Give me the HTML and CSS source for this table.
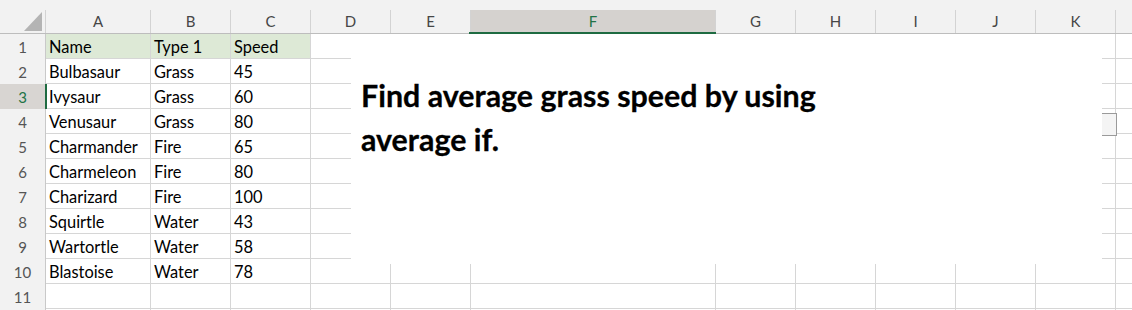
FILE: index.html
```html
<!DOCTYPE html>
<html lang="en">
<head>
<meta charset="utf-8">
<title>Pokémon speeds</title>
<link rel="stylesheet" href="styles.css">
</head>
<body>
<div class="sheet">
  <div class="col-heads">
    <div class="corner"><span class="select-all"></span></div>
    <div class="ch">A</div>
    <div class="ch">B</div>
    <div class="ch">C</div>
    <div class="ch">D</div>
    <div class="ch">E</div>
    <div class="ch sel">F</div>
    <div class="ch">G</div>
    <div class="ch">H</div>
    <div class="ch">I</div>
    <div class="ch">J</div>
    <div class="ch">K</div>
    <div class="ch"></div>
  </div>

  <div class="row">
    <div class="rh">1</div>
    <div class="c head">Name</div><div class="c head">Type 1</div><div class="c head">Speed</div>
    <div class="c"></div><div class="c"></div><div class="c"></div><div class="c"></div><div class="c"></div><div class="c"></div><div class="c"></div><div class="c"></div><div class="c"></div>
  </div>
  <div class="row">
    <div class="rh">2</div>
    <div class="c">Bulbasaur</div><div class="c">Grass</div><div class="c">45</div>
    <div class="c"></div><div class="c"></div><div class="c"></div><div class="c"></div><div class="c"></div><div class="c"></div><div class="c"></div><div class="c"></div><div class="c"></div>
  </div>
  <div class="row">
    <div class="rh sel">3</div>
    <div class="c">Ivysaur</div><div class="c">Grass</div><div class="c">60</div>
    <div class="c"></div><div class="c"></div><div class="c"></div><div class="c"></div><div class="c"></div><div class="c"></div><div class="c"></div><div class="c"></div><div class="c"></div>
  </div>
  <div class="row">
    <div class="rh">4</div>
    <div class="c">Venusaur</div><div class="c">Grass</div><div class="c">80</div>
    <div class="c"></div><div class="c"></div><div class="c"></div><div class="c"></div><div class="c"></div><div class="c"></div><div class="c"></div><div class="c"></div><div class="c"></div>
  </div>
  <div class="row">
    <div class="rh">5</div>
    <div class="c">Charmander</div><div class="c">Fire</div><div class="c">65</div>
    <div class="c"></div><div class="c"></div><div class="c"></div><div class="c"></div><div class="c"></div><div class="c"></div><div class="c"></div><div class="c"></div><div class="c"></div>
  </div>
  <div class="row">
    <div class="rh">6</div>
    <div class="c">Charmeleon</div><div class="c">Fire</div><div class="c">80</div>
    <div class="c"></div><div class="c"></div><div class="c"></div><div class="c"></div><div class="c"></div><div class="c"></div><div class="c"></div><div class="c"></div><div class="c"></div>
  </div>
  <div class="row">
    <div class="rh">7</div>
    <div class="c">Charizard</div><div class="c">Fire</div><div class="c">100</div>
    <div class="c"></div><div class="c"></div><div class="c"></div><div class="c"></div><div class="c"></div><div class="c"></div><div class="c"></div><div class="c"></div><div class="c"></div>
  </div>
  <div class="row">
    <div class="rh">8</div>
    <div class="c">Squirtle</div><div class="c">Water</div><div class="c">43</div>
    <div class="c"></div><div class="c"></div><div class="c"></div><div class="c"></div><div class="c"></div><div class="c"></div><div class="c"></div><div class="c"></div><div class="c"></div>
  </div>
  <div class="row">
    <div class="rh">9</div>
    <div class="c">Wartortle</div><div class="c">Water</div><div class="c">58</div>
    <div class="c"></div><div class="c"></div><div class="c"></div><div class="c"></div><div class="c"></div><div class="c"></div><div class="c"></div><div class="c"></div><div class="c"></div>
  </div>
  <div class="row">
    <div class="rh">10</div>
    <div class="c">Blastoise</div><div class="c">Water</div><div class="c">78</div>
    <div class="c"></div><div class="c"></div><div class="c"></div><div class="c"></div><div class="c"></div><div class="c"></div><div class="c"></div><div class="c"></div><div class="c"></div>
  </div>
  <div class="row">
    <div class="rh">11</div>
    <div class="c"></div><div class="c"></div><div class="c"></div>
    <div class="c"></div><div class="c"></div><div class="c"></div><div class="c"></div><div class="c"></div><div class="c"></div><div class="c"></div><div class="c"></div><div class="c"></div>
  </div>
  <div class="row">
    <div class="rh"></div>
    <div class="c"></div><div class="c"></div><div class="c"></div>
    <div class="c"></div><div class="c"></div><div class="c"></div><div class="c"></div><div class="c"></div><div class="c"></div><div class="c"></div><div class="c"></div><div class="c"></div>
  </div>

  <div class="textbox">
    <p class="task">Find average grass speed by using average if.</p>
    <span class="handle"></span>
  </div>
</div>
</body>
</html>
```

FILE: styles.css
```css
html, body {
  margin: 0;
  padding: 0;
  background: #ffffff;
  overflow: hidden;
}

.sheet {
  position: relative;
  width: 1132px;
  height: 310px;
  overflow: hidden;
  font-family: Lato, "Liberation Sans", sans-serif;
}

/* shared column track: row header, A..K, partial L */
.col-heads,
.row {
  display: grid;
  grid-template-columns: 46px 105px 80px 80px 80px 80px 245px 80px 80px 80px 80px 80px 40px;
}

/* column letters */
.col-heads {
  position: relative;
  z-index: 2;
  height: 33px;
  background: #f2f2f2;
  border-bottom: 1px solid #bdbdbd;
}

.corner {
  position: relative;
  margin-top: 10px;
  border-right: 1px solid #d3d3d3;
}

.select-all {
  position: absolute;
  left: 24px;
  top: 2px;
  width: 18px;
  height: 19px;
  background: #b4b4b4;
  clip-path: polygon(100% 0, 100% 100%, 0 100%);
}

.ch {
  position: relative;
  margin-top: 10px;
  border-right: 1px solid #d3d3d3;
  color: #464646;
  font-size: 15px;
  line-height: 23px;
  text-align: center;
}

.ch.sel {
  background: #d5d2cf;
  color: #217346;
}

.ch.sel::after {
  content: "";
  position: absolute;
  left: -2px;
  right: -1px;
  bottom: -1px;
  height: 2px;
  background: #1e6b41;
}

/* rows */
.row {
  height: 25px;
}

.rh {
  background: #f2f2f2;
  border-right: 1px solid #c9c9c9;
  color: #555555;
  font-size: 15px;
  line-height: 24px;
  padding-top: 1px;
  text-align: center;
}

.rh.sel {
  background: #d8d5d2;
  color: #217346;
  border-right: 2px solid #1e6b41;
  margin-right: -1px;
  position: relative;
  z-index: 1;
}

.c {
  border-right: 1px solid #d6d6d6;
  border-bottom: 1px solid #d6d6d6;
  color: #000000;
  font-size: 16.4px;
  line-height: 23px;
  padding: 1px 0 0 3px;
  white-space: nowrap;
  overflow: hidden;
}

.c.head {
  background: #dde9d6;
}

/* floating text box */
.textbox {
  position: absolute;
  z-index: 1;
  left: 351px;
  top: 0;
  width: 751px;
  height: 264px;
  background: #ffffff;
  box-sizing: border-box;
  padding: 74px 0 0 10px;
}

.task {
  margin: 0;
  width: 560px;
  font-family: Lato, "Liberation Sans", sans-serif;
  font-weight: 700;
  font-size: 30.4px;
  line-height: 43.5px;
  color: #000000;
  -webkit-text-stroke: 0.3px #000000;
}

.handle {
  position: absolute;
  right: -15px;
  top: 113px;
  width: 14px;
  height: 21px;
  background: #f4f4f4;
  border: 1px solid #9a9a9a;
  border-left: none;
}
```
